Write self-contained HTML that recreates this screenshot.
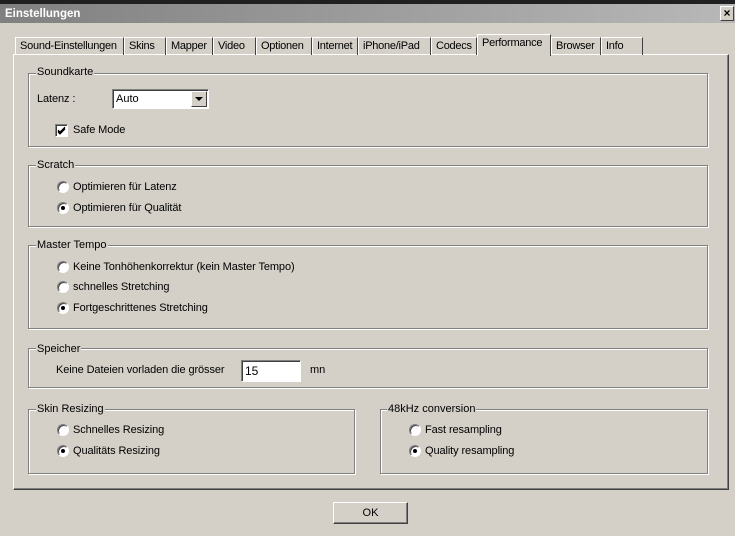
<!DOCTYPE html>
<html><head><meta charset="utf-8"><style>
*{box-sizing:border-box;margin:0;padding:0}
body{width:735px;height:536px;background:#d4d0c8;position:relative;overflow:hidden;font-family:"Liberation Sans",sans-serif;font-size:11px;color:#000}
.a{position:absolute}
.title{left:0;top:0;width:735px;height:4px;background:#202020}
.tb{left:0;top:4px;width:735px;height:19px;background:linear-gradient(90deg,#808080,#b8b8b8);color:#fff;font-weight:bold;font-size:11.5px;padding:4px 0 0 5px}
.x{left:720px;top:6px;width:14px;height:15px;background:#d4d0c8;border:1px solid;border-color:#fff #404040 #404040 #fff;font-size:12px;font-weight:bold;text-align:center;line-height:12px;color:#000}
.tab{top:37px;height:18px;border:1px solid;border-bottom:none;border-color:#fff #404040 transparent #fff;padding:2px 0 0 4px;white-space:nowrap;letter-spacing:-0.25px;overflow:hidden}
.panel{left:13px;top:54px;width:716px;height:436px;border:1px solid;border-color:#fff #404040 #404040 #fff;box-shadow:inset -1px -1px 0 #808080}
.grp{border:1px solid #808080;box-shadow:inset 1px 1px 0 #fff,1px 1px 0 #fff}
.lg{background:#d4d0c8;padding:0 1px;white-space:nowrap}
.r{width:12px;height:12px;border-radius:50%;background:#fff;border:1px solid;border-color:#808080 #fff #fff #808080;box-shadow:inset 1px 1px 0 #404040}
.r.on::after{content:"";position:absolute;left:3px;top:3px;width:4px;height:4px;border-radius:50%;background:#000}
.t{white-space:nowrap;letter-spacing:-0.1px}
.sunk{background:#fff;border:1px solid;border-color:#808080 #fff #fff #808080;box-shadow:inset 1px 1px 0 #404040}
</style></head><body>
<div class="a title"></div>
<div class="a tb">Einstellungen</div>
<div class="a x">×</div>

<div class="a panel"></div>
<div class="a tab" style="left:15px;width:109px">Sound-Einstellungen</div>
<div class="a tab" style="left:124px;width:42px">Skins</div>
<div class="a tab" style="left:166px;width:47px">Mapper</div>
<div class="a tab" style="left:213px;width:43px">Video</div>
<div class="a tab" style="left:256px;width:56px">Optionen</div>
<div class="a tab" style="left:312px;width:46px">Internet</div>
<div class="a tab" style="left:358px;width:73px">iPhone/iPad</div>
<div class="a tab" style="left:431px;width:46px">Codecs</div>
<div class="a tab" style="left:477px;top:34px;height:22px;width:74px;background:#d4d0c8;padding-top:2px">Performance</div>
<div class="a tab" style="left:551px;width:50px">Browser</div>
<div class="a tab" style="left:601px;width:42px">Info</div>

<div class="a grp" style="left:28px;top:73px;width:680px;height:74px"></div>
<div class="a lg" style="left:36px;top:66px">Soundkarte</div>
<div class="a t" style="left:37px;top:93px">Latenz :</div>
<div class="a sunk" style="left:112px;top:89px;width:97px;height:20px;padding:3px 0 0 3px">Auto</div>
<div class="a" style="left:191px;top:91px;width:16px;height:16px;background:#d4d0c8;border:1px solid;border-color:#fff #404040 #404040 #fff"><div class="a" style="left:3px;top:5px;width:0;height:0;border-left:4px solid transparent;border-right:4px solid transparent;border-top:4px solid #000"></div></div>
<div class="a sunk" style="left:55px;top:124px;width:13px;height:13px"><svg class="a" style="left:1px;top:1px" width="9" height="9"><path d="M1 4 L3 6 L8 1 M1 5 L3 7 L8 2 M1 6 L3 8 L8 3" stroke="#000" fill="none" stroke-width="1"/></svg></div>
<div class="a t" style="left:73px;top:124px">Safe Mode</div>

<div class="a grp" style="left:28px;top:165px;width:680px;height:62px"></div>
<div class="a lg" style="left:36px;top:159px">Scratch</div>
<div class="a r" style="left:57px;top:181px"></div><div class="a t" style="left:73px;top:181px">Optimieren für Latenz</div>
<div class="a r on" style="left:57px;top:202px"></div><div class="a t" style="left:73px;top:202px">Optimieren für Qualität</div>

<div class="a grp" style="left:28px;top:245px;width:680px;height:84px"></div>
<div class="a lg" style="left:36px;top:239px">Master Tempo</div>
<div class="a r" style="left:57px;top:261px"></div><div class="a t" style="left:73px;top:261px">Keine Tonhöhenkorrektur (kein Master Tempo)</div>
<div class="a r" style="left:57px;top:281px"></div><div class="a t" style="left:73px;top:281px">schnelles Stretching</div>
<div class="a r on" style="left:57px;top:302px"></div><div class="a t" style="left:73px;top:302px">Fortgeschrittenes Stretching</div>

<div class="a grp" style="left:28px;top:348px;width:680px;height:40px"></div>
<div class="a lg" style="left:36px;top:343px">Speicher</div>
<div class="a t" style="left:56px;top:364px">Keine Dateien vorladen die grösser</div>
<div class="a sunk" style="left:241px;top:360px;width:60px;height:22px;padding:3px 0 0 3px;font-size:12px">15</div>
<div class="a t" style="left:310px;top:364px">mn</div>

<div class="a grp" style="left:28px;top:409px;width:327px;height:65px"></div>
<div class="a lg" style="left:36px;top:403px">Skin Resizing</div>
<div class="a r" style="left:57px;top:424px"></div><div class="a t" style="left:73px;top:424px">Schnelles Resizing</div>
<div class="a r on" style="left:57px;top:445px"></div><div class="a t" style="left:73px;top:445px">Qualitäts Resizing</div>

<div class="a grp" style="left:380px;top:409px;width:328px;height:65px"></div>
<div class="a lg" style="left:387px;top:403px">48kHz conversion</div>
<div class="a r" style="left:409px;top:424px"></div><div class="a t" style="left:425px;top:424px">Fast resampling</div>
<div class="a r on" style="left:409px;top:445px"></div><div class="a t" style="left:425px;top:445px">Quality resampling</div>

<div class="a" style="left:333px;top:502px;width:75px;height:22px;border:1px solid;border-color:#fff #404040 #404040 #fff;box-shadow:inset -1px -1px 0 #808080;text-align:center;padding-top:4px">OK</div>
</body></html>
